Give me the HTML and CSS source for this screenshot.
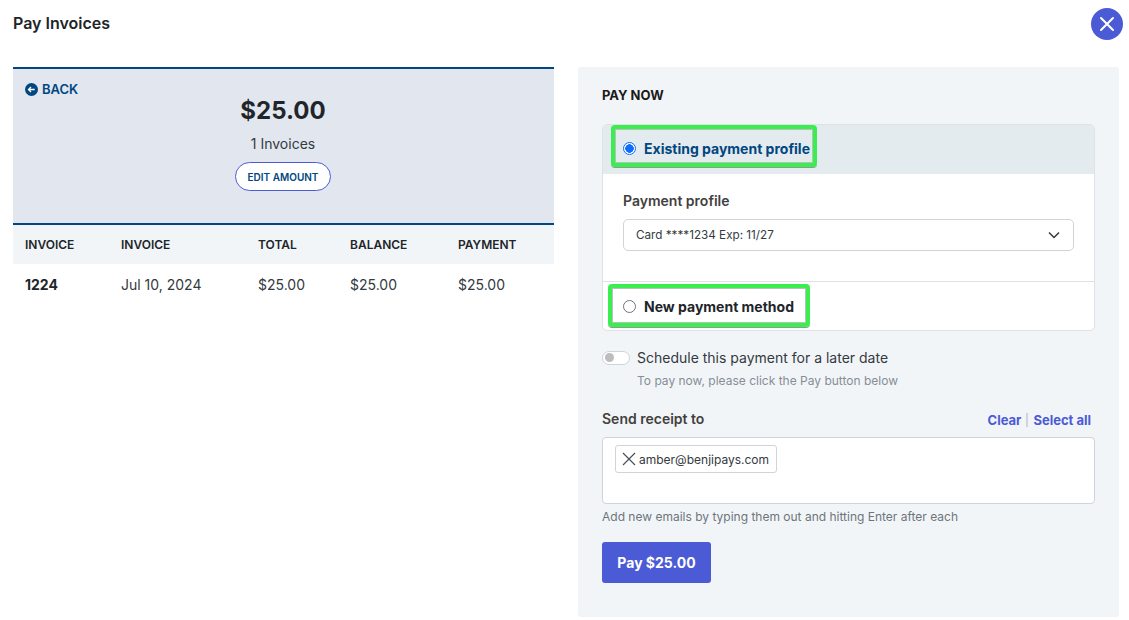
FILE: index.html
```html
<!DOCTYPE html>
<html lang="en">
<head>
    <meta charset="UTF-8">
    <meta name="viewport" content="width=device-width, initial-scale=1.0">
    <title>Pay Invoices</title>
    <link rel="stylesheet" href="styles.css">
</head>
<body>
    <header class="modal-header">
        <h1>Pay Invoices</h1>
        <button class="close-btn" aria-label="Close">
            <svg width="16" height="16" viewBox="0 0 16 16"><path d="M2 2 L14 14 M14 2 L2 14" stroke="#fff" stroke-width="2" stroke-linecap="round"/></svg>
        </button>
    </header>

    <main class="modal-body">
        <!-- invoices -->
        <section class="invoices">
            <div class="summary">
                <a class="back" href="#">
                    <svg width="13" height="13" viewBox="0 0 13 13"><circle cx="6.5" cy="6.5" r="6.5" fill="#004680"/><path d="M9.7 6.5 H3.6 M6 4 L3.5 6.5 L6 9" stroke="#fff" stroke-width="1.3" fill="none"/></svg>
                    BACK
                </a>
                <div class="amount">$25.00</div>
                <div class="count">1 Invoices</div>
                <button class="edit-btn">EDIT AMOUNT</button>
            </div>
            <table class="invoice-table">
                <thead>
                    <tr>
                        <th class="col-a">INVOICE</th>
                        <th class="col-b">INVOICE</th>
                        <th class="col-c">TOTAL</th>
                        <th class="col-d">BALANCE</th>
                        <th>PAYMENT</th>
                    </tr>
                </thead>
                <tbody>
                    <tr>
                        <td class="invoice-no">1224</td>
                        <td>Jul 10, 2024</td>
                        <td>$25.00</td>
                        <td>$25.00</td>
                        <td>$25.00</td>
                    </tr>
                </tbody>
            </table>
        </section>

        <!-- payment -->
        <section class="pay-panel">
            <h2>PAY NOW</h2>

            <div class="methods">
                <div class="method-head">
                    <label class="highlight highlight-first">
                        <span class="radio radio-on"></span>
                        Existing payment profile
                    </label>
                </div>
                <div class="method-body">
                    <div class="field-label">Payment profile</div>
                    <div class="select">
                        <span>Card ****1234 Exp: 11/27</span>
                        <svg width="14" height="14" viewBox="0 0 14 14"><path d="M2 4.5 L7 9.5 L12 4.5" stroke="#343a40" stroke-width="1.5" fill="none"/></svg>
                    </div>
                </div>
                <div class="method-foot">
                    <label class="highlight highlight-second">
                        <span class="radio"></span>
                        New payment method
                    </label>
                </div>
            </div>

            <div class="schedule">
                <span class="toggle"><span class="knob"></span></span>
                <span>Schedule this payment for a later date</span>
            </div>
            <div class="schedule-note">To pay now, please click the Pay button below</div>

            <div class="receipt-head">
                <span class="field-label">Send receipt to</span>
                <span class="receipt-links"><a href="#">Clear</a><i></i><a href="#">Select all</a></span>
            </div>
            <div class="emails">
                <span class="chip">
                    <svg width="14" height="14" viewBox="0 0 14 14"><path d="M1 1 L13 13 M13 1 L1 13" stroke="#495057" stroke-width="1.2"/></svg>
                    amber@benjipays.com
                </span>
            </div>
            <div class="emails-note">Add new emails by typing them out and hitting Enter after each</div>

            <button class="pay-btn">Pay $25.00</button>
        </section>
    </main>
</body>
</html>
```

FILE: styles.css
```css
html, body {
    height: 620px;
    overflow: hidden;
}

body {
    font-family: Inter, "Noto Sans", sans-serif;
    background-color: #fff;
    color: #212529;
    margin: 0;
    padding: 0;
}

.modal-header {
    display: flex;
    justify-content: space-between;
    align-items: center;
    height: 48px;
    padding: 0 6px 0 13px;
}

.modal-header h1 {
    font-size: 16px;
    font-weight: 600;
    margin: 0 0 2px;
    color: #212529;
}

.close-btn {
    width: 32px;
    height: 32px;
    border: none;
    border-radius: 50%;
    background-color: #4b5bd6;
    padding: 0;
    display: flex;
    align-items: center;
    justify-content: center;
}

.modal-body {
    display: flex;
    gap: 24px;
    padding: 19px 10px 0 13px;
}

.invoices {
    width: 541px;
    flex-shrink: 0;
}

.summary {
    position: relative;
    height: 127px;
    padding: 27px 1px 0 0;
    background-color: #e2e7ef;
    border-top: 2px solid #004680;
    border-bottom: 2px solid #004680;
    text-align: center;
}

.back {
    position: absolute;
    left: 12px;
    top: 13px;
    display: flex;
    align-items: center;
    gap: 4px;
    font-size: 13px;
    font-weight: 600;
    line-height: 14px;
    color: #004680;
    text-decoration: none;
}

.amount {
    font-size: 24px;
    font-weight: 700;
    line-height: 29px;
    color: #212529;
}

.count {
    font-size: 14px;
    line-height: 17px;
    margin-top: 10px;
    color: #343a40;
}

.edit-btn {
    display: block;
    width: 96px;
    height: 29px;
    margin: 10px auto 0;
    padding: 0;
    font-family: inherit;
    font-size: 10px;
    font-weight: 600;
    color: #004680;
    background-color: #fff;
    border: 1px solid #4b5bd6;
    border-radius: 15px;
}

.invoice-table {
    width: 100%;
    border-collapse: collapse;
    table-layout: fixed;
    font-size: 14px;
}

.invoice-table th {
    box-sizing: border-box;
    height: 39px;
    padding: 0 0 0 12px;
    text-align: left;
    font-size: 12px;
    font-weight: 600;
    background-color: #f2f5f8;
    color: #212529;
}

.invoice-table td {
    height: 41px;
    padding: 0 0 0 12px;
    color: #343a40;
}

.col-a { width: 96px; }
.col-b { width: 137px; }
.col-c { width: 92px; }
.col-d { width: 108px; }

.invoice-table .invoice-no {
    font-weight: 700;
    color: #212529;
}

.pay-panel {
    width: 541px;
    height: 550px;
    box-sizing: border-box;
    padding: 20px 24px 0;
    background-color: #f2f5f8;
    border-radius: 3px;
}

.pay-panel h2 {
    font-size: 13px;
    font-weight: 700;
    line-height: 16px;
    margin: 0 0 21px;
    color: #1a1a1a;
}

.methods {
    width: 493px;
    height: 207px;
    box-sizing: border-box;
    background-color: #fff;
    border: 1px solid #dee2e6;
    border-radius: 5px;
    overflow: hidden;
}

.method-head {
    display: flex;
    align-items: flex-start;
    height: 49px;
    background-color: #e4ebee;
    padding-left: 8px;
}

/* green annotation boxes around the two options */
.highlight {
    display: inline-flex;
    align-items: center;
    gap: 8px;
    box-sizing: border-box;
    font-size: 14px;
    font-weight: 700;
    border: 4px solid #3bee4f;
    border-radius: 4px;
    box-shadow: inset 0 0 0 1px #b4c2ba, 0 1px 0 #8d9a93;
}

.highlight-first {
    width: 206px;
    height: 42px;
    padding: 4px 0 0 8px;
    color: #004680;
}

.highlight-second {
    width: 202px;
    height: 43px;
    padding: 1px 0 0 11px;
    color: #212529;
    margin-left: 5px;
    margin-top: 2px;
}

.radio {
    width: 13px;
    height: 13px;
    box-sizing: border-box;
    border: 1px solid #6c757d;
    border-radius: 50%;
    background-color: #fff;
    flex-shrink: 0;
}

.radio-on {
    border-color: #0d6efd;
    background: radial-gradient(circle, #0d6efd 4px, #fff 4.5px);
}

.method-body {
    height: 108px;
    box-sizing: border-box;
    padding: 18px 20px 0;
    border-bottom: 1px solid #dee2e6;
}

.field-label {
    font-size: 14px;
    font-weight: 600;
    line-height: 17px;
    color: #43403e;
}

.select {
    display: flex;
    justify-content: space-between;
    align-items: center;
    height: 32px;
    box-sizing: border-box;
    margin-top: 10px;
    padding: 0 12px;
    font-size: 11.7px;
    color: #343a40;
    background-color: #fff;
    border: 1px solid #ced4da;
    border-radius: 5px;
}

.schedule {
    display: flex;
    align-items: center;
    gap: 7px;
    margin-top: 18px;
    font-size: 14px;
    line-height: 17px;
    color: #343a40;
}

.toggle {
    width: 28px;
    height: 14px;
    box-sizing: border-box;
    border: 1px solid #ced4da;
    border-radius: 7px;
    background-color: #fff;
    display: flex;
    align-items: center;
    padding-left: 2px;
}

.knob {
    width: 9px;
    height: 9px;
    border-radius: 50%;
    background-color: #bdbdbd;
}

.schedule-note {
    margin: 8px 0 0 35px;
    font-size: 12px;
    line-height: 14px;
    color: #868e96;
}

.receipt-head {
    display: flex;
    justify-content: space-between;
    align-items: flex-start;
    width: 493px;
    height: 17px;
    margin-top: 22px;
    padding-right: 4px;
    box-sizing: border-box;
}

.receipt-links {
    display: flex;
    align-items: center;
    margin-top: 2px;
    font-size: 13px;
    line-height: 16px;
    font-weight: 700;
}

.receipt-links a {
    color: #4b5bd6;
    text-decoration: none;
}

.receipt-links i {
    width: 2px;
    height: 14px;
    margin: 0 5px;
    background-color: #ced4da;
}

.emails {
    width: 493px;
    height: 67px;
    box-sizing: border-box;
    margin-top: 10px;
    padding: 7px 12px;
    background-color: #fff;
    border: 1px solid #ced4da;
    border-radius: 4px;
}

.chip {
    display: inline-flex;
    align-items: center;
    gap: 3px;
    height: 28px;
    box-sizing: border-box;
    padding: 0 7px 0 6px;
    font-size: 12px;
    color: #343a40;
    background-color: #fff;
    border: 1px solid #ced4da;
    border-radius: 3px;
}

.emails-note {
    margin-top: 6px;
    font-size: 12px;
    line-height: 14px;
    color: #6c757d;
}

.pay-btn {
    display: block;
    width: 109px;
    height: 41px;
    margin-top: 18px;
    padding: 0;
    font-family: inherit;
    font-size: 14px;
    font-weight: 700;
    color: #fff;
    background-color: #4b5bd6;
    border: none;
    border-radius: 3px;
}
```
